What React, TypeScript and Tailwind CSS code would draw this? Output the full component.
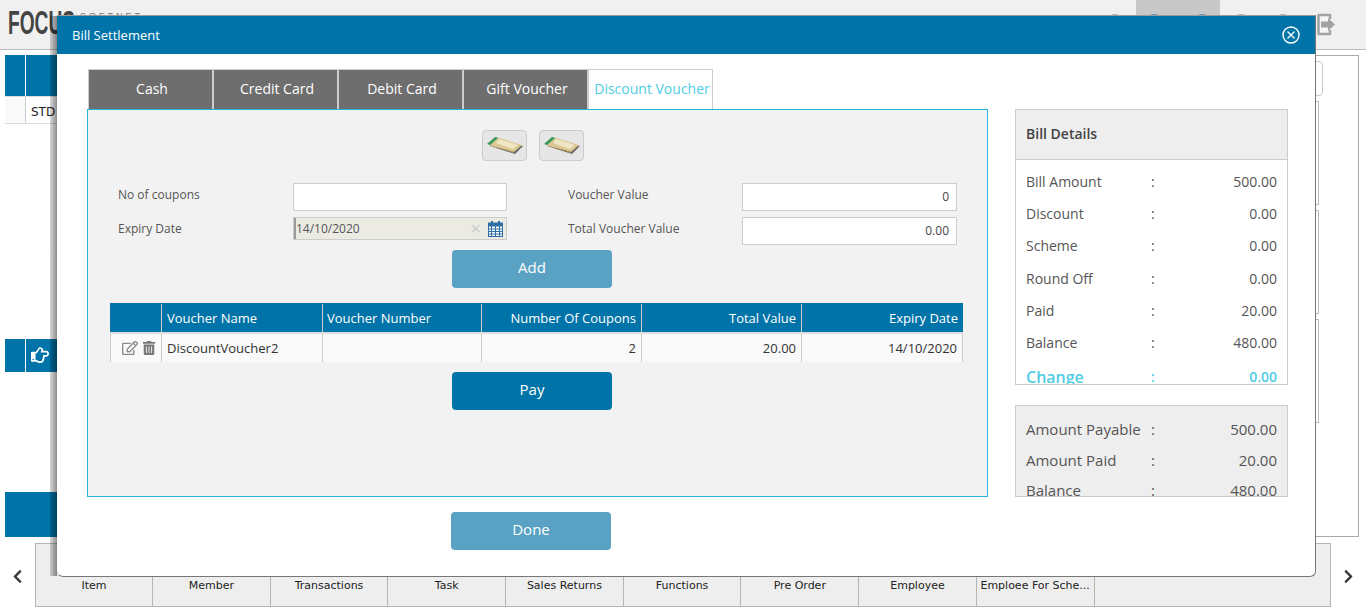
import { FaChevronLeft, FaChevronRight, FaRegEdit, FaRegHandPointRight, FaTrashAlt } from "react-icons/fa";

const billRows = [
  ["Bill Amount", "500.00"],
  ["Discount", "0.00"],
  ["Scheme", "0.00"],
  ["Round Off", "0.00"],
  ["Paid", "20.00"],
  ["Balance", "480.00"],
];

const summaryRows = [
  ["Amount Payable", "500.00"],
  ["Amount Paid", "20.00"],
  ["Balance", "480.00"],
];

const navItems = ["Item", "Member", "Transactions", "Task", "Sales Returns", "Functions", "Pre Order", "Employee", "Emploee For Sche..."];

const VoucherIcon = () => (
  <svg width="36" height="17" viewBox="0 0 36 17">
    <polygon points="6,10 28,17 36,9 31,8 26,14" fill="#4a4a4a" opacity="0.8" />
    <polygon points="9,0 35,8 27,15 1,7" fill="#dcc992" />
    <polygon points="12,2 31,8 26,12 20,10 9,6" fill="#efe6c6" />
    <polygon points="3,8 27,15 27,16 3,9" fill="#a88f57" />
    <polygon points="0,7 8,0 11,1 3,8" fill="#35985a" />
  </svg>
);

const CalendarIcon = () => (
  <svg width="15" height="16" viewBox="0 0 15 16">
    <rect x="0.5" y="2" width="14" height="13.5" fill="#fff" stroke="#2f6ea5" />
    <rect x="0" y="2" width="15" height="3.5" fill="#2f6ea5" />
    <rect x="3" y="0" width="2" height="3" fill="#2f6ea5" />
    <rect x="10" y="0" width="2" height="3" fill="#2f6ea5" />
    <path d="M0 8h15M0 10.5h15M0 13h15M3.5 5v10M7.5 5v10M11.5 5v10" stroke="#2f6ea5" strokeWidth="1" />
  </svg>
);

const ExitIcon = () => (
  <svg width="18" height="23" viewBox="0 0 18 23">
    <path d="M13 6V2H1.5v19H13v-4" fill="#f5f5f5" stroke="#a3a3a3" strokeWidth="2.5" strokeLinejoin="round" />
    <path d="M4 8.5h7V5l7 6.5-7 6.5v-3.5H4z" fill="#a3a3a3" />
  </svg>
);

const CloseIcon = () => (
  <svg width="18" height="18" viewBox="0 0 18 18" fill="none" stroke="#fff">
    <circle cx="9" cy="9" r="8" strokeWidth="1.4" />
    <path d="M5.5 5.5l7 7M12.5 5.5l-7 7" strokeWidth="1.3" />
  </svg>
);

const Backdrop = () => (
  <div className="flex h-[613px] flex-col bg-white font-['DejaVu_Sans',sans-serif] text-[11px] text-[#222]">
    <header className="flex h-[50px] items-start border-b border-[#bbb] bg-[#f0f0f0] pl-2">
      <span className="mt-[6px] inline-block w-[72px] origin-left scale-x-[0.58] font-['Liberation_Sans',sans-serif] text-[33px] leading-[34px] font-bold text-[#444]">
        FOCUS
      </span>
      <span className="mt-[12px] font-['Liberation_Sans',sans-serif] text-[9px] leading-[9px] tracking-[3px] text-[#777]">
        SOFTNET
      </span>
      {/* toolbar icons, only their tops show above the dialog */}
      <div className="mt-[14px] ml-auto h-4 w-4 rounded-full border-2 border-[#aaa]" />
      <div className="ml-[13px] flex h-full w-[84px] justify-between bg-[#c8c8c8] px-[10px] pt-[14px]">
        <div className="h-4 w-4 rounded-full border-2 border-[#5b86b8]" />
        <div className="h-4 w-4 rounded-full border-2 border-[#5b86b8]" />
      </div>
      <div className="mt-[14px] ml-[13px] h-4 w-4 rounded-full border-2 border-[#aaa]" />
      <div className="mt-[14px] ml-[26px] h-4 w-4 rounded-full border-2 border-[#aaa]" />
      <div className="mt-[13px] mr-[31px] ml-[26px]">
        <ExitIcon />
      </div>
    </header>
    <div className="mt-[5px] flex h-[482px] pr-[7px] pl-[5px]">
      <div className="flex w-[60px] flex-col">
        <div className="flex h-[42px] gap-px border-b border-[#ddd]">
          <div className="w-5 bg-[#0073a8]" />
          <div className="flex-1 bg-[#0073a8]" />
        </div>
        <div className="flex h-[27px] border-b border-[#ddd]">
          <div className="w-[21px] border-r border-[#ccc] bg-[#f9f9f9]" />
          <span className="pt-[6px] pl-[5px] text-[12px]">STD</span>
        </div>
        <div className="mt-[215px] flex h-[34px] gap-px">
          <div className="w-5 bg-[#0073a8]" />
          <div className="flex flex-1 items-center bg-[#0073a8] pl-[5px] text-white">
            <FaRegHandPointRight size={18} />
          </div>
        </div>
        <div className="mt-[120px] h-[45px] bg-[#0073a8]" />
      </div>
      <div className="ml-auto flex w-[100px] flex-col items-end gap-[5px] border border-[#aaa] pt-[5px] pr-[39px] pl-[40px]">
        <div className="-mr-[4px] h-[35px] w-[36px] shrink-0 rounded border border-[#ccc]" />
        <div className="h-[104px] w-full shrink-0 border border-[#bbb]" />
        <div className="h-[104px] w-full shrink-0 border border-[#bbb]" />
        <div className="h-[104px] w-full shrink-0 border border-[#bbb]" />
      </div>
    </div>
    <div className="mt-[6px] flex h-[64px] items-center">
      <div className="flex w-[35px] justify-center pt-[2px] text-[#3a3a3a]">
        <FaChevronLeft size={15} />
      </div>
      <div className="flex h-full w-[1296px] border border-[#b5b5b5] bg-[#eee]">
        {navItems.map((item) => (
          <div key={item} className="h-full w-[117.7px] overflow-hidden border-r border-[#b5b5b5] pt-[35px] text-center leading-[14px] whitespace-nowrap text-[#222] first:w-[117px]">
            {item}
          </div>
        ))}
      </div>
      <div className="flex flex-1 justify-center pt-[2px] text-[#3a3a3a]">
        <FaChevronRight size={15} />
      </div>
    </div>
  </div>
);

const Modal = () => (
  <div className="absolute top-[15px] left-[57px] flex h-[562px] w-[1259px] flex-col rounded-b-md border-t border-r border-b border-t-[#999] border-r-[#777] border-b-[#777] bg-white font-['Open_Sans',sans-serif]">
    {/* shadow strip left of the dialog */}
    <div className="absolute top-0 -left-[7px] h-full w-[7px] bg-gradient-to-r from-black/15 to-black/45" />
    <div className="flex h-[38px] items-center justify-between bg-[#0073a8] pr-[15px] pl-[15px] text-[13px] text-white">
      <span className="pt-[2px]">Bill Settlement</span>
      <CloseIcon />
    </div>
    <div className="flex gap-[27px] pt-[15px] pl-[30px]">
      <div className="w-[901px]">
        <div className="ml-px flex h-[40px] text-[14px]">
          {["Cash", "Credit Card", "Debit Card", "Gift Voucher"].map((tab) => (
            <div key={tab} className="flex w-[125px] items-center justify-center border border-b-0 border-[#ccc] bg-[#6e6e6e] pb-[2px] pl-[3px] text-white">
              {tab}
            </div>
          ))}
          <div className="flex w-[125px] items-center justify-center border border-b-0 border-[#ccc] bg-white pb-[2px] pl-[3px] whitespace-nowrap text-[#4fcde4]">
            Discount Voucher
          </div>
        </div>
        <div className="h-[388px] border border-[#1fb6e0] bg-[#f2f2f2]">
          <div className="mt-5 flex justify-center gap-3 pr-[9px]">
            <button className="flex h-[31px] w-[45px] items-center justify-center rounded border border-[#ccc] bg-[#e6e6e6]">
              <VoucherIcon />
            </button>
            <button className="flex h-[31px] w-[45px] items-center justify-center rounded border border-[#ccc] bg-[#e6e6e6]">
              <VoucherIcon />
            </button>
          </div>
          <div className="mt-[22px] grid grid-cols-[175px_214px_61px_174px_215px] grid-rows-[28px_28px] gap-y-[6px] pl-[30px] text-[12px] text-[#555]">
            <label className="pt-[3px]">No of coupons</label>
            <input className="h-[28px] border border-[#ccc] bg-white" />
            <span />
            <label className="pt-[3px]">Voucher Value</label>
            <div className="flex h-[28px] items-center justify-end border border-[#ccc] bg-white pr-[7px] text-[#444]">0</div>
            <label className="pt-[3px]">Expiry Date</label>
            <div className="flex h-[23px] items-center border border-[#ccc] bg-[#ebebe4] text-[#555]">
              <span className="h-full w-[2px] bg-[#999]" />
              <span>14/10/2020</span>
              <span className="mr-[7px] ml-auto text-[19px] leading-none text-[#ccc]">×</span>
              <span className="mr-[3px]">
                <CalendarIcon />
              </span>
            </div>
            <span />
            <label className="pt-[3px]">Total Voucher Value</label>
            <div className="flex h-[28px] items-center justify-end border border-[#ccc] bg-white pr-[7px] text-[#444]">0.00</div>
          </div>
          <button className="mt-[5px] ml-[364px] block h-[38px] w-[160px] rounded-sm bg-[#5aa2c3] pb-[3px] text-[15px] text-white">Add</button>
          <div className="mt-[15px] ml-[22px] w-[853px] text-[13px]">
            <div className="flex h-[29px] bg-[#0073a8] pt-px text-white">
              <div className="w-[52px] border-x border-[#ccc] border-l-[#0073a8]" />
              <div className="flex w-[161px] items-center border-r border-[#ccc] pt-px pl-[5px]">Voucher Name</div>
              <div className="flex w-[159px] items-center border-r border-[#ccc] pt-px pl-[4px]">Voucher Number</div>
              <div className="flex w-[160px] items-center justify-end border-r border-[#ccc] pt-px pr-[5px]">Number Of Coupons</div>
              <div className="flex w-[160px] items-center justify-end border-r border-[#ccc] pt-px pr-[5px]">Total Value</div>
              <div className="flex flex-1 items-center justify-end pt-px pr-[5px]">Expiry Date</div>
            </div>
            <div className="flex h-[30px] border-t-2 border-[#ddd] bg-[#f9f9f9] text-[#333]">
              <div className="flex w-[52px] items-center justify-end gap-[4px] border-x border-[#ccc] pr-[5px] text-[#8a8a8a]">
                <FaRegEdit size={16} />
                <FaTrashAlt size={14} className="text-[#777]" />
              </div>
              <div className="flex w-[161px] items-center border-r border-[#ccc] pt-[2px] pl-[5px]">DiscountVoucher2</div>
              <div className="w-[159px] border-r border-[#ccc]" />
              <div className="flex w-[160px] items-center justify-end border-r border-[#ccc] pt-[2px] pr-[5px]">2</div>
              <div className="flex w-[160px] items-center justify-end border-r border-[#ccc] pt-[2px] pr-[5px]">20.00</div>
              <div className="flex flex-1 items-center justify-end border-r border-[#ccc] pt-[2px] pr-[5px]">14/10/2020</div>
            </div>
          </div>
          <button className="mt-[10px] ml-[364px] block h-[38px] w-[160px] rounded-sm bg-[#0073a8] pb-[3px] text-[15px] text-white">Pay</button>
        </div>
        <button className="mt-[15px] ml-[364px] block h-[38px] w-[160px] rounded-sm bg-[#5aa2c3] pb-[3px] text-[15px] text-white">Done</button>
      </div>
      <div className="mt-[40px] w-[273px] text-[#555]">
        <div className="h-[276px] overflow-hidden border border-[#ccc] text-[14px]">
          <div className="flex h-[50px] items-center border-b border-[#ccc] bg-[#eee] pb-[2px] pl-[10px] font-semibold text-[#444]">Bill Details</div>
          <div className="px-[10px] pt-[5px]">
            {billRows.map(([label, value]) => (
              <div key={label} className="flex h-[32.3px] items-center">
                <span className="w-[125px]">{label}</span>
                <span>:</span>
                <span className="ml-auto">{value}</span>
              </div>
            ))}
            <div className="flex h-[36px] items-center font-semibold text-[#4fcde4]">
              <span className="w-[125px] text-[16px]">Change</span>
              <span>:</span>
              <span className="ml-auto">0.00</span>
            </div>
          </div>
        </div>
        <div className="mt-[20px] h-[92px] overflow-hidden border border-[#ccc] bg-[#eee] px-[10px] pt-[8px] text-[15px]">
          {summaryRows.map(([label, value]) => (
            <div key={label} className="flex h-[30.5px] items-center">
              <span className="w-[125px] whitespace-nowrap">{label}</span>
              <span>:</span>
              <span className="ml-auto">{value}</span>
            </div>
          ))}
        </div>
      </div>
    </div>
  </div>
);

export default function App() {
  return (
    <div className="relative h-[613px] w-[1366px] overflow-hidden">
      <Backdrop />
      <Modal />
    </div>
  );
}
